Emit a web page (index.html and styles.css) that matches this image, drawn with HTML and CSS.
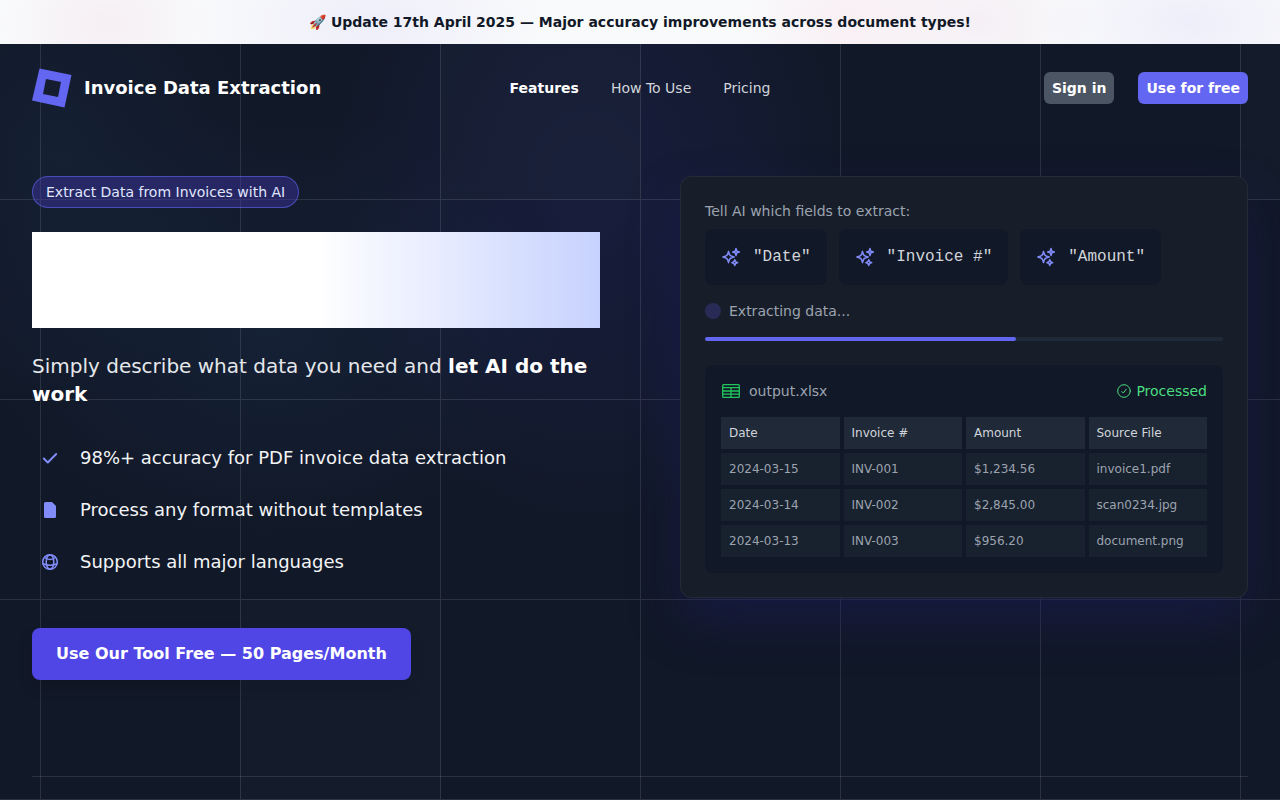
FILE: index.html
```html
<!DOCTYPE html>
<html lang="en">
<head>
<meta charset="utf-8">
<meta name="viewport" content="width=device-width, initial-scale=1">
<title>Invoice Data Extraction</title>
<link rel="stylesheet" href="styles.css">
</head>
<body>
<svg class="grid-bg" aria-hidden="true">
  <defs>
    <pattern id="grid" width="200" height="200" x="50%" y="-1" patternUnits="userSpaceOnUse">
      <path d="M.5 200V.5H200" fill="none" class="grid-line"/>
    </pattern>
  </defs>
  <svg x="50%" y="-1" class="grid-cells">
    <path d="M-200 0h201v201h-201Z M600 0h201v201h-201Z M-400 600h201v201h-201Z"/>
  </svg>
  <rect width="100%" height="100%" fill="url(#grid)"/>
</svg>
<svg class="symbols" aria-hidden="true">
  <symbol id="sparkles" viewBox="0 0 24 24">
    <path d="M9.813 15.904 9 18.75l-.813-2.846a4.5 4.5 0 0 0-3.09-3.09L2.25 12l2.846-.813a4.5 4.5 0 0 0 3.09-3.09L9 5.25l.813 2.846a4.5 4.5 0 0 0 3.09 3.09L15.75 12l-2.846.813a4.5 4.5 0 0 0-3.09 3.09Z M18 1.800 19 5 22 6 19 7 18 10.200 17 7 14 6 17 5Z M16.500 15.200 17.500 17.750 20 18.750 17.500 19.750 16.500 22.200 15.500 19.750 13 18.750 15.500 17.750Z"/>
  </symbol>
</svg>

<div class="banner"><p>🚀 Update 17th April 2025 — Major accuracy improvements across document types!</p></div>

<header class="header">
  <a class="brand" href="#">
    <svg class="logo" viewBox="0 0 40 40" aria-hidden="true"><path fill-rule="evenodd" d="M7.5.5 39.500 7 32.500 39.500 0 32.500Z M14 11 11 26 26 29 29 14Z"/></svg>
    <span>Invoice Data Extraction</span>
  </a>
  <nav class="nav">
    <a class="active" href="#">Features</a>
    <a href="#">How To Use</a>
    <a href="#">Pricing</a>
  </nav>
  <div class="actions">
    <a class="btn btn-muted" href="#">Sign in</a>
    <a class="btn btn-primary" href="#">Use for free</a>
  </div>
</header>

<main class="main">
  <section class="hero">
    <div class="intro">
      <p class="badge">Extract Data from Invoices with AI</p>
      <div class="headline"></div>
      <p class="lead">Simply describe what data you need and <strong>let AI do the work</strong></p>
      <ul class="features">
        <li><span class="feature-icon"><svg class="stroke" viewBox="0 0 20 20"><path stroke-width="2" d="m3.800 10.500 4 4L16.200 6"/></svg></span>98%+ accuracy for PDF invoice data extraction</li>
        <li><span class="feature-icon"><svg class="solid" viewBox="0 0 20 20"><path d="M5.500 2H12l4 4v10.500A1.500 1.500 0 0 1 14.500 18h-9A1.500 1.500 0 0 1 4 16.500v-13A1.500 1.500 0 0 1 5.500 2Z"/></svg></span>Process any format without templates</li>
        <li><span class="feature-icon"><svg class="stroke" viewBox="0 0 20 20"><g stroke-width="1.500"><circle cx="10" cy="10" r="7.300"/><ellipse cx="10" cy="10" rx="3.800" ry="7.300"/><path d="M4.500 5.500Q10 9.500 15.500 5.500M3 11.800Q10 14.800 17 11.800"/></g></svg></span>Supports all major languages</li>
      </ul>
      <a class="cta" href="#">Use Our Tool Free — 50 Pages/Month</a>
    </div>

    <div class="card">
      <p class="label">Tell AI which fields to extract:</p>
      <div class="pills">
        <span class="pill"><svg class="stroke sparkle"><use href="#sparkles"/></svg>"Date"</span>
        <span class="pill"><svg class="stroke sparkle"><use href="#sparkles"/></svg>"Invoice #"</span>
        <span class="pill"><svg class="stroke sparkle"><use href="#sparkles"/></svg>"Amount"</span>
      </div>
      <div class="status"><span class="dot"></span>Extracting data...</div>
      <div class="progress"><div class="progress-fill" style="width:60%"></div></div>
      <div class="output">
        <div class="output-head">
          <span class="file"><svg class="stroke table-icon" viewBox="0 0 20 20"><rect x="1.700" y="3.600" width="16.600" height="12.800" rx="1"/><path d="M2 6.700h16M2 10h16M2 13.200h16M10 6.700v9.700"/></svg>output.xlsx</span>
          <span class="done"><svg class="stroke done-icon" viewBox="0 0 16 16"><circle cx="8" cy="8" r="6.300"/><path d="m5.800 8.500 1.500 1.500 2.900-3.700"/></svg>Processed</span>
        </div>
        <table>
          <thead><tr><th>Date</th><th>Invoice #</th><th>Amount</th><th>Source File</th></tr></thead>
          <tbody>
            <tr><td>2024-03-15</td><td>INV-001</td><td>$1,234.56</td><td>invoice1.pdf</td></tr>
            <tr><td>2024-03-14</td><td>INV-002</td><td>$2,845.00</td><td>scan0234.jpg</td></tr>
            <tr><td>2024-03-13</td><td>INV-003</td><td>$956.20</td><td>document.png</td></tr>
          </tbody>
        </table>
      </div>
    </div>
  </section>
  <hr class="divider">
</main>
</body>
</html>
```

FILE: styles.css
```css
* { box-sizing: border-box; }
body, p, ul { margin: 0; padding: 0; }
body {
  position: relative;
  min-height: 100vh;
  overflow-x: hidden;
  color: #fff;
  font: 14px/20px "DejaVu Sans", sans-serif;
  background:
    radial-gradient(260px 340px at 590px 190px, rgba(60, 60, 180, .15), rgba(60, 60, 180, .08) 60%, transparent),
    radial-gradient(300px 220px at 270px 330px, rgba(50, 95, 160, .12), transparent),
    radial-gradient(200px 240px at 60px 160px, rgba(50, 95, 150, .11), transparent),
    #111827;
}
a { color: inherit; text-decoration: none; }
.grid-bg { position: absolute; inset: 0; z-index: -1; width: 100%; height: 100%; }
.grid-line { stroke: rgba(255, 255, 255, .11); }
.grid-cells { overflow: visible; fill: rgba(31, 41, 55, .3); }
.symbols { position: absolute; width: 0; height: 0; }
.stroke {
  fill: none;
  stroke: currentColor;
  stroke-width: 1.2;
  stroke-linecap: round;
  stroke-linejoin: round;
}
.solid { fill: currentColor; }

.banner {
  padding: 12px 24px;
  text-align: center;
  font-weight: 700;
  color: #111827;
  background:
    radial-gradient(110px 80px at 105px 24px, rgba(190, 60, 130, .06), transparent),
    radial-gradient(180px 90px at 370px 22px, rgba(99, 80, 241, .07), transparent),
    radial-gradient(110px 80px at 850px 18px, rgba(244, 63, 130, .06), transparent),
    radial-gradient(110px 80px at 980px 22px, rgba(170, 40, 130, .05), transparent),
    radial-gradient(150px 80px at 1190px 22px, rgba(99, 80, 241, .07), transparent),
    #f9fafb;
}

.header { display: flex; align-items: center; padding: 24px 32px; }
.brand { flex: 1; display: flex; align-items: center; gap: 12px; font-size: 18px; font-weight: 700; }
.logo { width: 40px; height: 40px; fill: #6366f1; }
.nav { display: flex; gap: 32px; color: #d1d5db; }
.nav .active { color: #fff; font-weight: 700; }
.actions { flex: 1; display: flex; justify-content: flex-end; gap: 24px; }
.btn { padding: 6px 8px; border-radius: 6px; font-weight: 700; }
.btn-muted { background: #4b5563; }
.btn-primary { background: #6366f1; }

.main { padding: 44px 32px 0; }
.hero { display: grid; grid-template-columns: 1fr 1fr; gap: 80px; align-items: start; }
.intro { display: flex; flex-direction: column; align-items: flex-start; }
.badge {
  padding: 5px 13px;
  border: 1px solid rgba(99, 102, 241, .6);
  border-radius: 16px;
  color: #e0e7ff;
  background: rgba(67, 56, 180, .4);
}
.headline {
  align-self: stretch;
  height: 96px;
  margin: 24px 0;
  background: linear-gradient(to right, #fff, #fff 50%, #c7d2fe);
}
.lead { font-size: 20px; line-height: 28px; color: #e5e7eb; }
.lead strong { color: #fff; }
.features {
  display: grid;
  gap: 16px;
  margin: 32px 0 48px;
  list-style: none;
  font-size: 18px;
  line-height: 28px;
  color: #f3f4f6;
}
.features li { display: flex; align-items: center; gap: 12px; }
.feature-icon { display: grid; place-items: center; width: 36px; height: 36px; color: #818cf8; }
.feature-icon svg { width: 20px; height: 20px; }
.cta {
  padding: 14px 24px;
  border-radius: 8px;
  font-size: 16px;
  line-height: 24px;
  font-weight: 700;
  background: #4f46e5;
  box-shadow: 0 8px 16px rgba(0, 0, 0, .12);
}

.card {
  padding: 24px;
  border: 1px solid rgba(255, 255, 255, .06);
  border-radius: 12px;
  color: #9ca3af;
  background: #171e2a;
  box-shadow: 0 24px 50px rgba(30, 27, 100, .4);
}
.pills { display: flex; flex-wrap: wrap; gap: 12px; margin: 8px 0 16px; }
.pill {
  display: flex;
  align-items: center;
  gap: 12px;
  padding: 16px;
  border-radius: 8px;
  font: 16px/24px "Liberation Mono", monospace;
  color: #d1d5db;
  background: #111827;
}
.sparkle { width: 20px; height: 20px; color: #818cf8; stroke-width: 1.8; }
.status { display: flex; align-items: center; gap: 8px; }
.dot { width: 16px; height: 16px; border-radius: 50%; background: #282b55; }
.progress { height: 4px; margin: 16px 0 24px; border-radius: 2px; background: #1f2937; }
.progress-fill { height: 100%; border-radius: 2px; background: #6366f1; }
.output { padding: 16px; border-radius: 8px; background: #111827; }
.output-head { display: flex; justify-content: space-between; margin-bottom: 16px; }
.file, .done { display: flex; align-items: center; }
.file { gap: 8px; }
.done { gap: 4px; color: #4ade80; }
.table-icon { width: 20px; height: 20px; color: #22c55e; stroke-width: 1.3; }
.done-icon { width: 16px; height: 16px; stroke-width: 1; }
table, thead, tbody { display: grid; gap: 4px; }
table { font-size: 12px; line-height: 16px; }
tr { display: grid; grid-template-columns: repeat(4, 1fr); gap: 4px; }
th, td { padding: 8px; text-align: left; font-weight: 400; }
th { color: #d1d5db; background: #1f2937; }
td { background: #18212e; }
.divider { height: 1px; margin: 96px 0 0; border: 0; background: rgba(255, 255, 255, .11); }
```
